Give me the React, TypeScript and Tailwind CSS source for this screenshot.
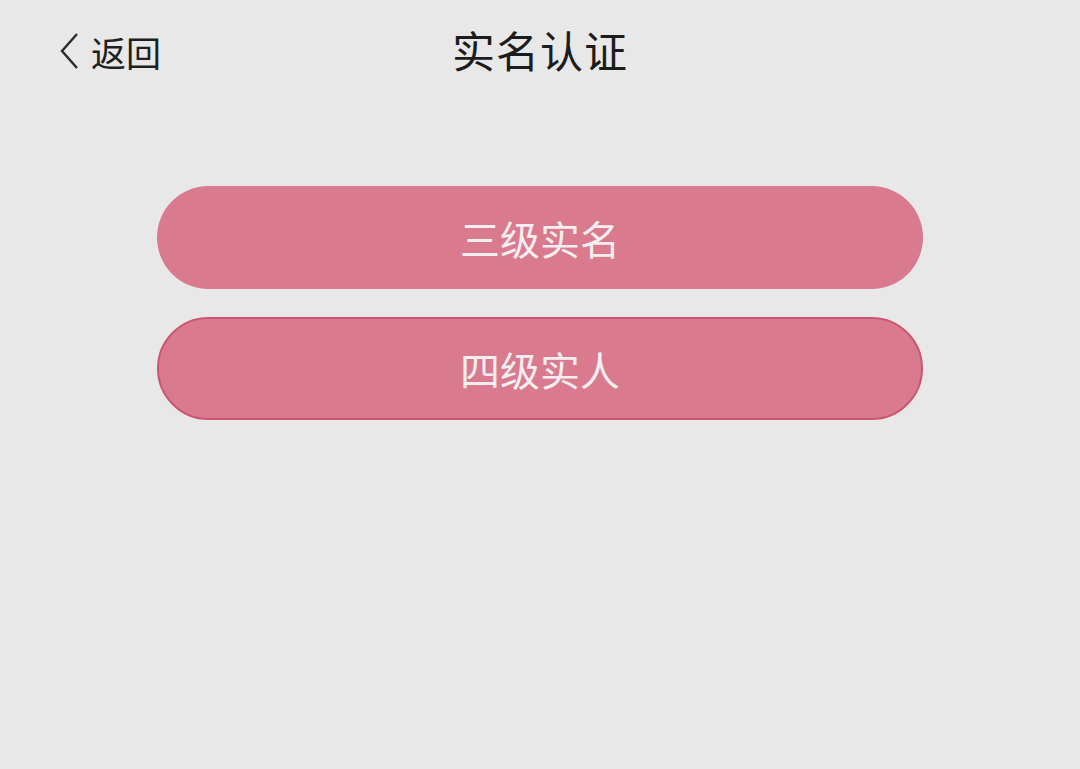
import React from "react";

export default function App() {
  return (
    <div
      className="w-[1080px] h-[769px] bg-[#e8e8e8] flex flex-col"
      style={{ fontFamily: '"Noto Sans CJK SC", "Noto Sans", sans-serif' }}
    >
      <div className="relative h-[102px] flex items-center justify-center pb-[4px]">
        <div className="absolute left-[58px] top-[30px] flex items-center h-[42px]">
          <svg width="22" height="38" viewBox="0 0 22 38" className="mr-[11px]">
            <path d="M19 2 L4 19 L19 36" fill="none" stroke="#2a2a2a" strokeWidth="2.4" />
          </svg>
          <span className="text-[35px] leading-none text-[#1f1f1f]">返回</span>
        </div>
        <span className="text-[43px] leading-none text-[#1c1c1c] tracking-[1px]">实名认证</span>
      </div>
      <div className="flex flex-col px-[157px] pt-[84px] gap-[28px]">
        <button className="h-[103px] w-full rounded-full bg-[#d97a8e] flex items-center justify-center text-[40px] text-[#f4eef0] leading-none">
          三级实名
        </button>
        <button className="h-[103px] w-full rounded-full bg-[#d97a8e] border-2 border-[#cc5670] flex items-center justify-center text-[40px] text-[#f4eef0] leading-none">
          四级实人
        </button>
      </div>
    </div>
  );
}
